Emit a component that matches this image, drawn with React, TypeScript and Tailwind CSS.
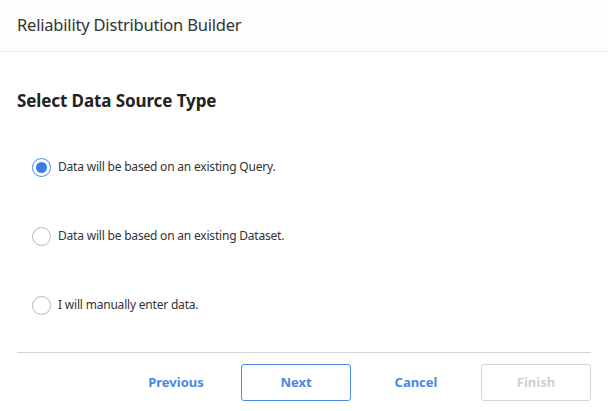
import React, { useState } from "react";

const options = [
  { id: "query", label: "Data will be based on an existing Query." },
  { id: "dataset", label: "Data will be based on an existing Dataset." },
  { id: "manual", label: "I will manually enter data." },
];

const App: React.FC = () => {
  const [selected, setSelected] = useState("query");

  return (
    <div
      className="w-[608px] h-[411px] bg-white text-[#333] overflow-hidden"
      style={{ fontFamily: '"Noto Sans", "Open Sans", sans-serif' }}
    >
      <div className="h-[52px] bg-[#fdfdfd] border-b border-[#ececec] flex items-center px-[17px]">
        <h1 className="text-[16.5px] text-[#333] tracking-[-0.2px]">Reliability Distribution Builder</h1>
      </div>

      <div className="px-[17px]">
        <h2 className="mt-[37px] text-[17px] font-bold text-[#222] leading-6 tracking-[-0.1px]">
          Select Data Source Type
        </h2>

        <div className="mt-[45px] flex flex-col gap-[51px] pl-[15px]">
          {options.map((o) => {
            const on = selected === o.id;
            return (
              <label key={o.id} className="flex items-center gap-[7px] h-[18px] cursor-pointer" onClick={() => setSelected(o.id)}>
                <span
                  className={`w-[19px] h-[19px] rounded-full border flex items-center justify-center ${
                    on ? "border-[#4a88e4] border-[1.5px]" : "border-[#b8b8b8]"
                  }`}
                >
                  {on && <span className="w-[11px] h-[11px] rounded-full bg-[#3b7de0]" />}
                </span>
                <span className="text-[12px] text-[#333] tracking-[-0.2px]">{o.label}</span>
              </label>
            );
          })}
        </div>

        <div className="mt-[38px] border-t border-[#d4d4d4] w-[574px]" />

        <div className="mt-[11px] flex justify-end gap-[10px] w-[574px]">
          <button className="w-[110px] h-[37px] text-[13px] font-bold text-[#4a88e4]">Previous</button>
          <button className="w-[110px] h-[37px] text-[13px] font-bold text-[#4a88e4] border border-[#4a88e4] rounded-[3px]">
            Next
          </button>
          <button className="w-[110px] h-[37px] text-[13px] font-bold text-[#4a88e4]">Cancel</button>
          <button className="w-[110px] h-[37px] text-[13px] font-bold text-[#cfcfcf] border border-[#d6d6d6] rounded-[3px]" disabled>
            Finish
          </button>
        </div>
      </div>
    </div>
  );
};

export default App;
